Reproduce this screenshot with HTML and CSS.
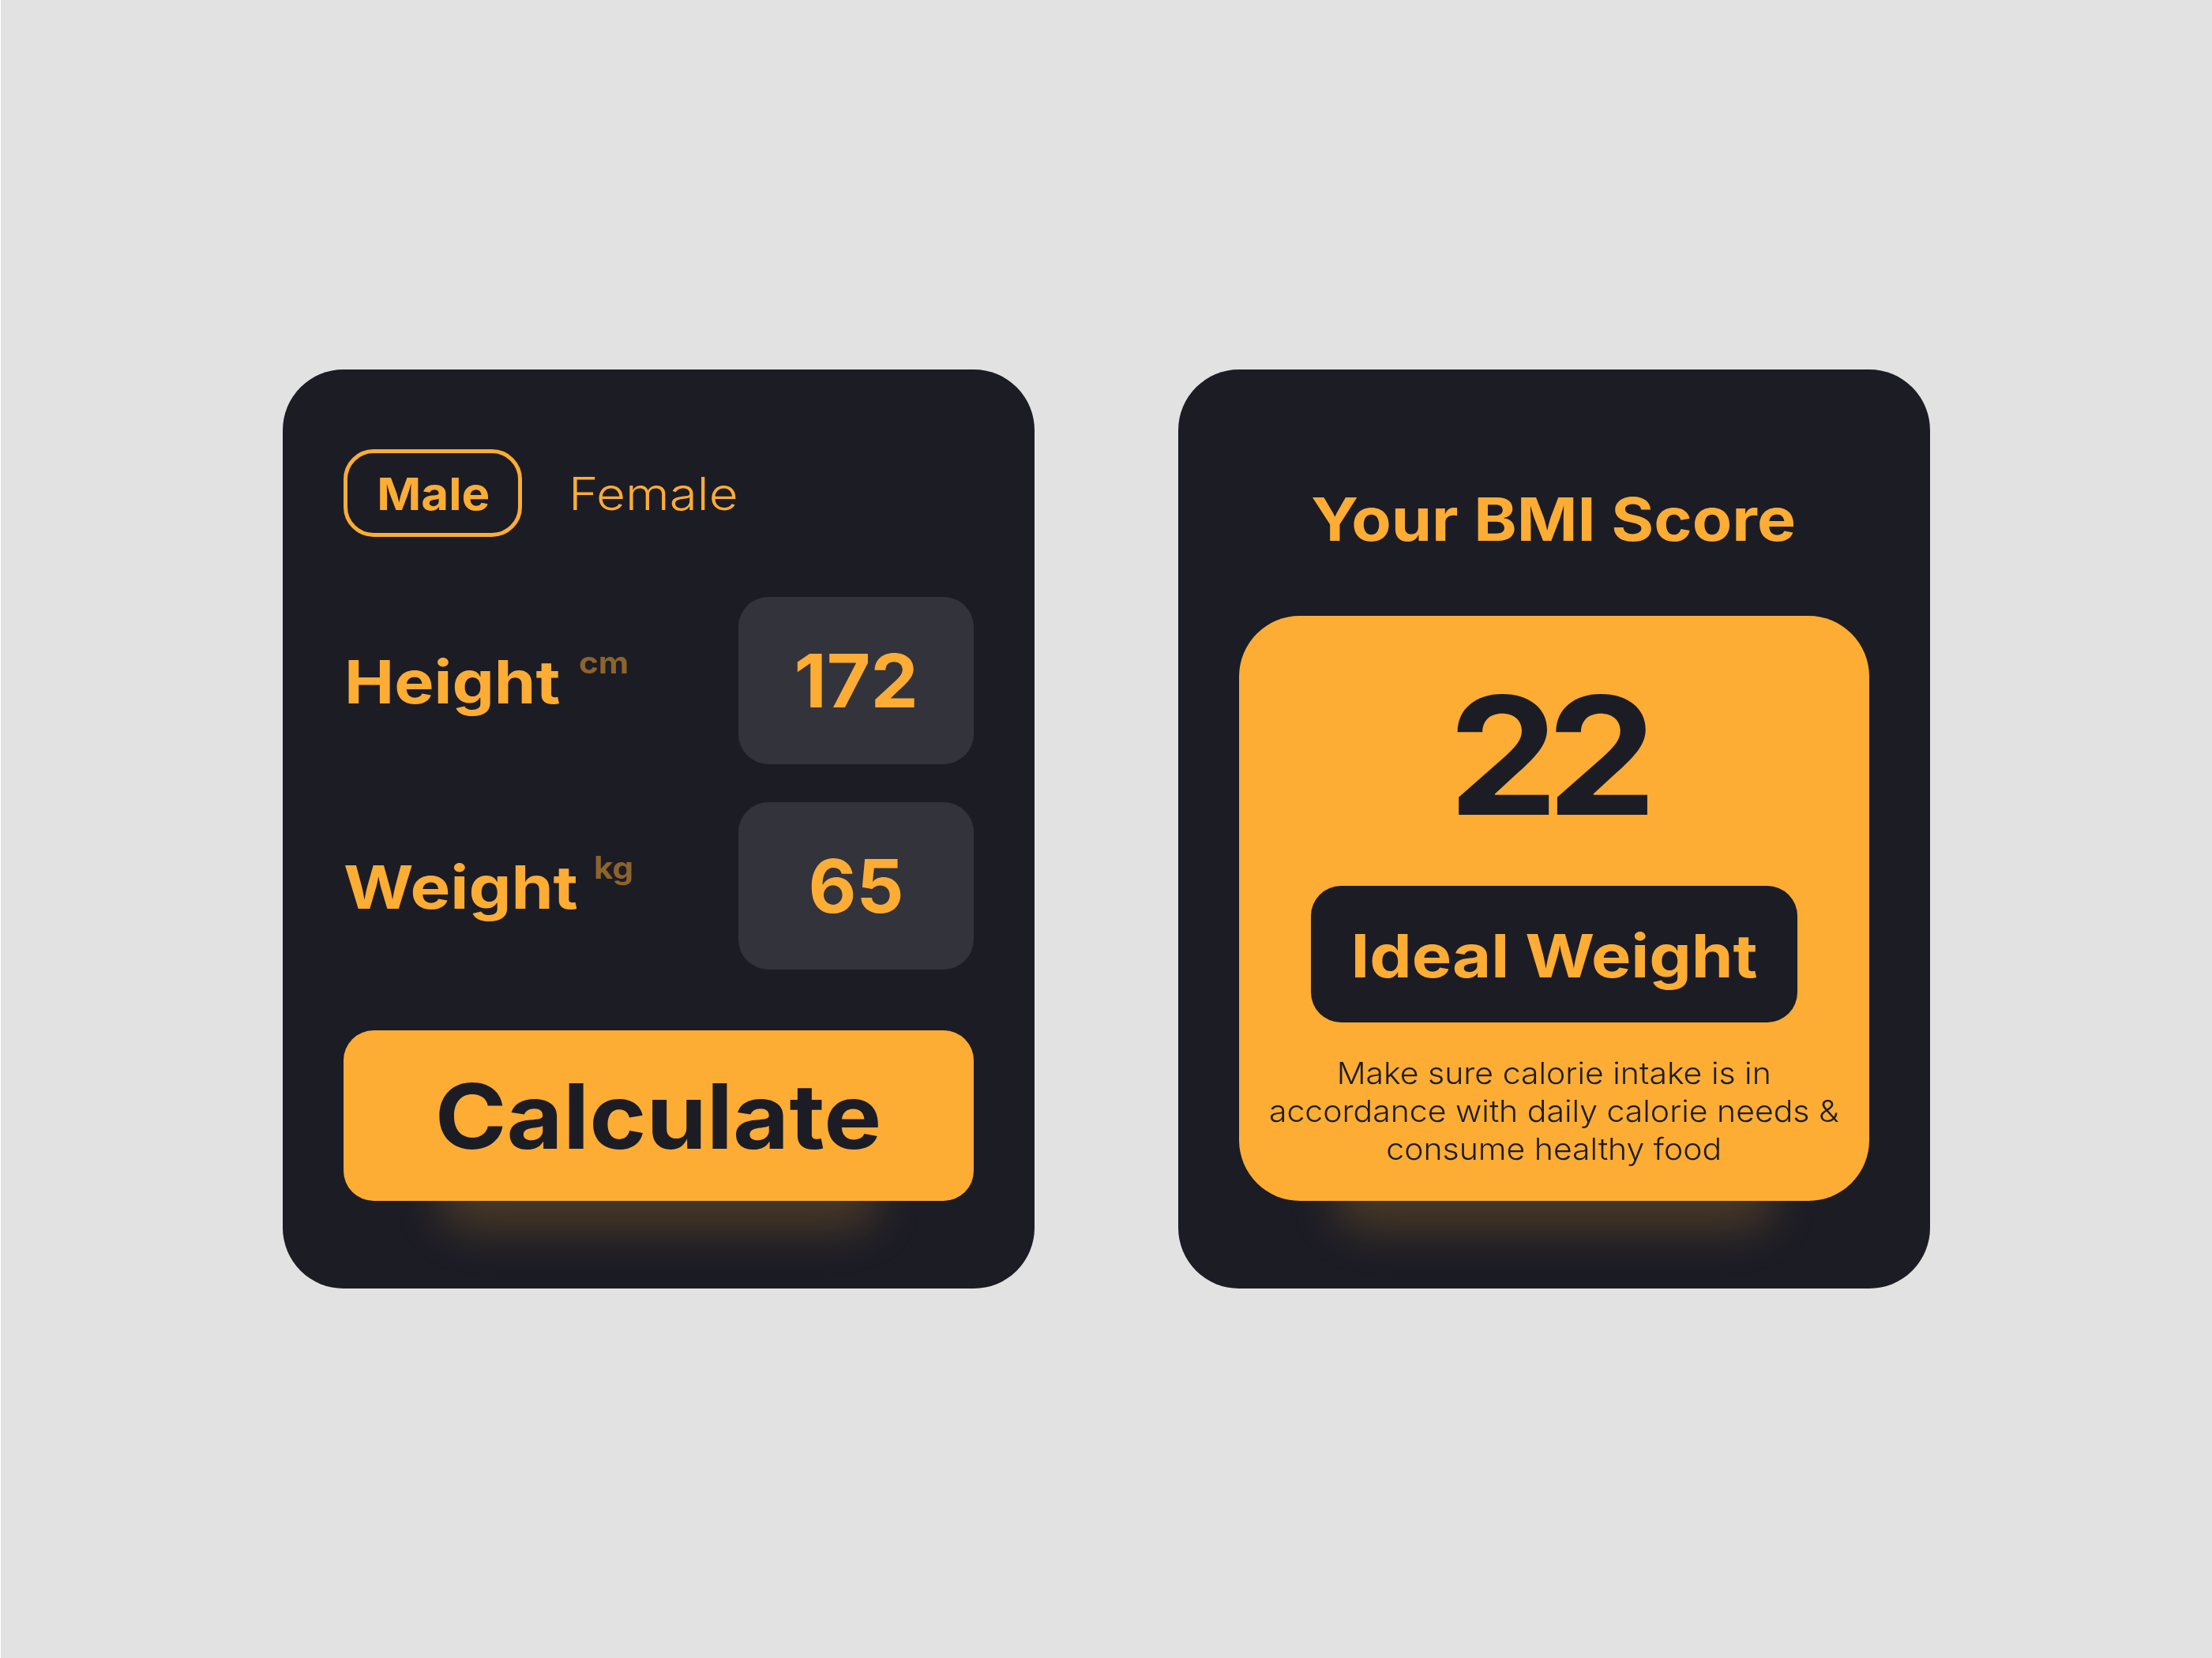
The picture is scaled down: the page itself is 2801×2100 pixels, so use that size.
FILE: index.html
```html
<!DOCTYPE html>
<html lang="en">
<head>
    <meta charset="UTF-8">
    <title>BMI Calculator</title>
    <meta name="viewport" content="width=device-width, initial-scale=1">
    <link rel="stylesheet" href="styles.css">
</head>
<body>
    <main class="screens">
        <section class="card form-card">
            <div class="gender">
                <button class="gender-btn active"><span class="wide">Male</span></button>
                <button class="gender-btn"><span class="wide">Female</span></button>
            </div>
            <div class="field height">
                <div class="label"><span class="wide">Height</span> <span class="wide unit">cm</span></div>
                <div class="value"><span class="wide">172</span></div>
            </div>
            <div class="field weight">
                <div class="label"><span class="wide">Weight</span> <span class="wide unit">kg</span></div>
                <div class="value">65</div>
            </div>
            <div class="glow">
                <button class="calculate"><span class="wide">Calculate</span></button>
            </div>
        </section>

        <section class="card score-card">
            <h1 class="title"><span class="wide">Your BMI Score</span></h1>
            <div class="glow">
                <div class="result">
                    <div class="score"><span class="wide">22</span></div>
                    <div class="status"><span class="wide">Ideal Weight</span></div>
                    <p class="advice wide">Make sure calorie intake is in<br>accordance with daily calorie needs &amp;<br>consume healthy food</p>
                </div>
            </div>
        </section>
    </main>
</body>
</html>
```
FILE: styles.css
```css
* {
    box-sizing: border-box;
    margin: 0;
    padding: 0;
}
body {
    background: #e2e2e2;
    border-left: 1px solid #fff;
    font-family: Inter, sans-serif;
    color: #fdad33;
    min-height: 100vh;
}
button {
    font-family: inherit;
    border: none;
    background: none;
    color: inherit;
    cursor: pointer;
}
/* extended lettering, each text sets its own --stretch */
.wide {
    display: inline-block;
    transform: scaleX(var(--stretch));
}
.screens {
    display: flex;
    justify-content: center;
    align-items: center;
    gap: 182px;
    min-height: 100vh;
}
.card {
    width: 952px;
    height: 1164px;
    padding: 0 77px;
    background: #1c1c25;
    border-radius: 77px;
}
.form-card {
    padding-top: 101px;
}
.gender {
    display: flex;
    gap: 19px;
    margin-bottom: 76px;
}
.gender-btn {
    --stretch: 1.12;
    height: 111px;
    padding: 2px 40px 0;
    font-size: 57px;
    font-weight: 300;
}
.gender-btn .wide {
    transform-origin: left;
}
.gender-btn.active {
    --stretch: 1.055;
    width: 226px;
    padding: 2px 0 0 1px;
    border: 5px solid #fdad33;
    border-radius: 38px;
    font-weight: 700;
}
.gender-btn.active .wide {
    transform-origin: center;
}
.field {
    display: flex;
    justify-content: space-between;
    align-items: center;
    margin-bottom: 48px;
}
.label {
    --stretch: 1.112;
    display: flex;
    align-items: center;
    padding: 2px 0 0 1px;
    font-size: 76px;
    font-weight: 700;
}
.label .wide {
    transform-origin: left;
}
.weight .label {
    --stretch: 1.124;
    padding-left: 0;
}
.label .unit {
    --stretch: 1.08;
    margin: 0 0 49px 51px;
    font-size: 39px;
    color: #8c642c;
}
.weight .unit {
    margin-left: 53px;
}
.value {
    --stretch: 1.02;
    display: flex;
    justify-content: center;
    align-items: center;
    width: 298px;
    height: 212px;
    background: #33333b;
    border-radius: 38px;
    font-size: 94px;
    font-weight: 700;
}
.glow {
    position: relative;
    z-index: 0;
}
/* soft light under the button and the result */
.glow::after {
    content: "";
    position: absolute;
    z-index: -1;
    left: 121px;
    right: 121px;
    bottom: -36px;
    height: 150px;
    background: rgba(253, 173, 51, 0.2);
    border-radius: 38px;
    filter: blur(28px);
}
.calculate {
    --stretch: 1.077;
    display: block;
    width: 100%;
    height: 216px;
    margin-top: 77px;
    background: #fdad33;
    border-radius: 38px;
    color: #1c1c25;
    font-size: 114px;
    font-weight: 700;
}
.title {
    --stretch: 1.085;
    height: 312px;
    padding: 139px 2px 0 0;
    font-size: 76px;
    line-height: 100px;
    text-align: center;
    white-space: nowrap;
}
.result {
    display: flex;
    flex-direction: column;
    align-items: center;
    height: 741px;
    padding-top: 77px;
    background: #fdad33;
    border-radius: 77px;
    color: #1c1c25;
}
.score {
    --stretch: 1.07;
    height: 265px;
    padding-right: 19px;
    font-size: 207px;
    font-weight: 700;
    line-height: 200px;
    letter-spacing: -14px;
}
.status {
    --stretch: 1.115;
    width: 616px;
    height: 173px;
    padding-top: 4px;
    background: #1c1c25;
    border-radius: 38px;
    color: #fdad33;
    font-size: 76px;
    font-weight: 700;
    line-height: 169px;
    text-align: center;
}
.advice {
    --stretch: 1.078;
    margin-top: 40px;
    font-size: 38px;
    font-weight: 300;
    line-height: 48px;
    text-align: center;
}
```
